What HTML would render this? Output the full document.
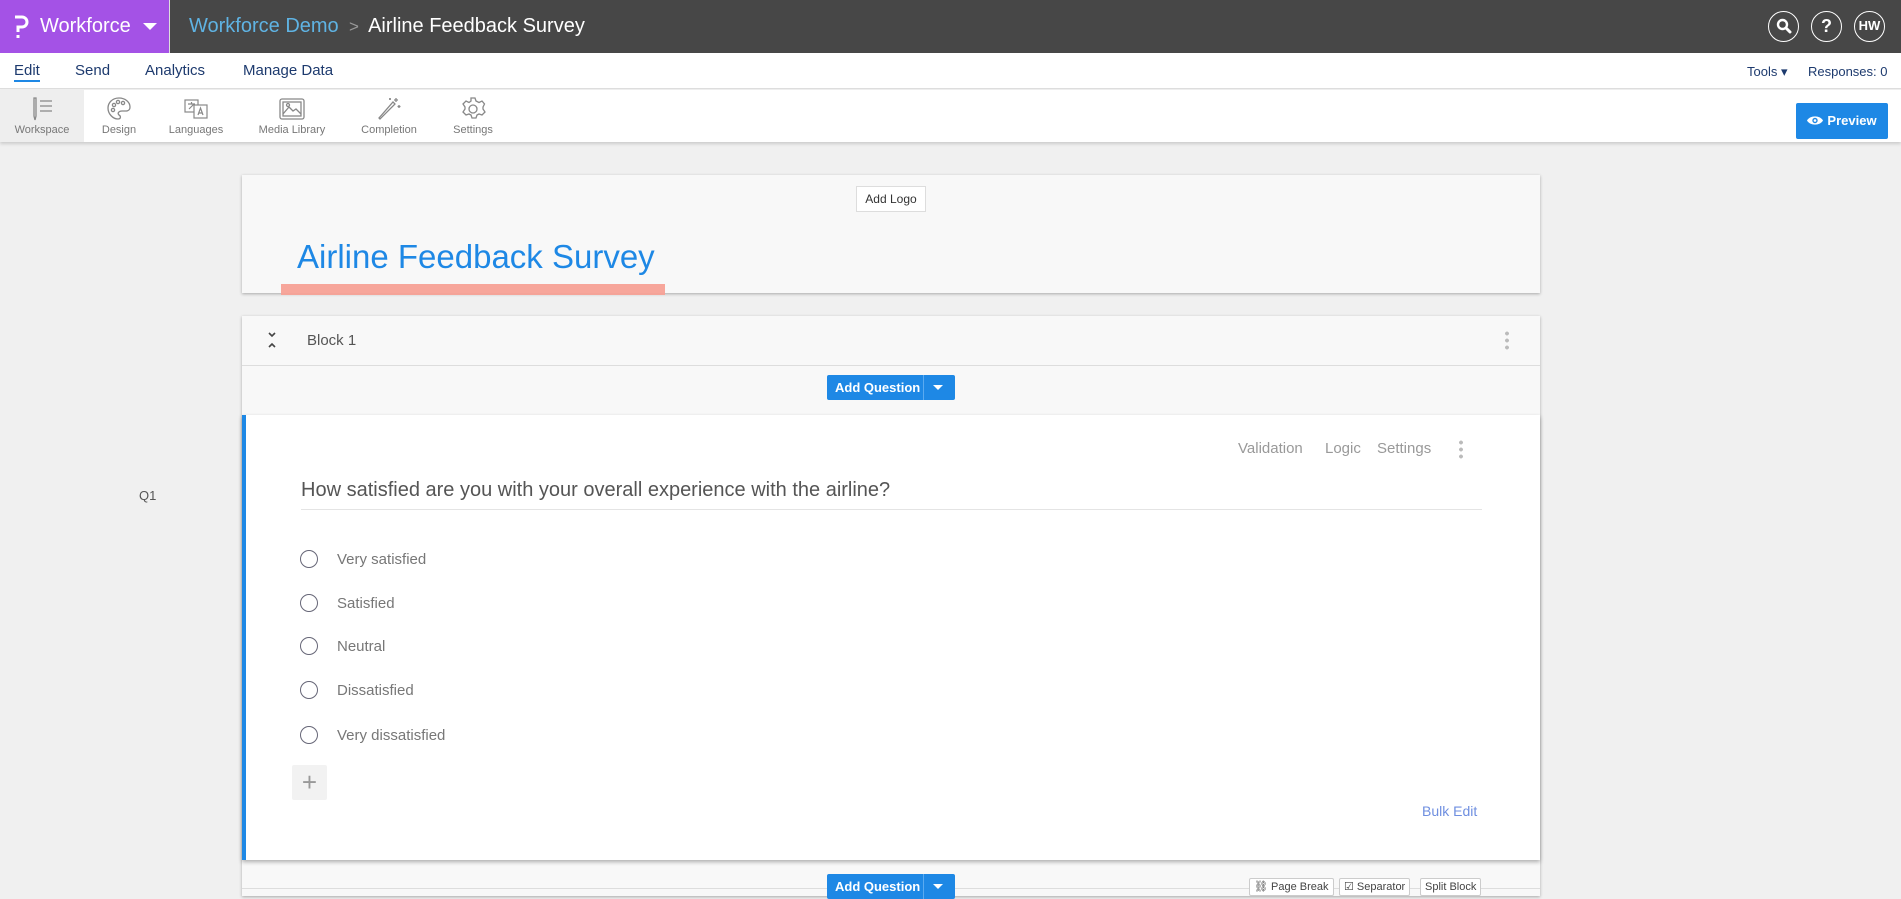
<!DOCTYPE html>
<html><head><meta charset="utf-8"><style>
*{box-sizing:border-box;margin:0;padding:0}
body{width:1901px;height:892px;overflow:hidden;background:#f0f0f0;font-family:"Liberation Sans",sans-serif;position:relative}
.a{position:absolute}
.top{left:0;top:0;width:1901px;height:53px;background:#474747}
.brand{left:0;top:0;width:170px;height:53px;background:#a452e6;border-right:1px solid #ddd}
.nav{left:0;top:53px;width:1901px;height:36px;background:#fff;border-bottom:1px solid #ddd}
.nav span{position:absolute;top:9px;font-size:15px;color:#1d3a6e}
.tb{left:0;top:90px;width:1901px;height:52px;background:#fff;box-shadow:0 2px 3px rgba(0,0,0,.15)}
.ti{position:absolute;top:0;height:52px;text-align:center;font-size:11px;color:#777}
.ti svg{display:block;margin:6px auto 2px}
.circ{width:31px;height:31px;border:1.5px solid #fff;border-radius:50%;color:#fff;font-weight:bold;text-align:center;line-height:28px;font-size:14px;top:11px}
.card{background:#f8f8f8;box-shadow:0 1px 3px rgba(0,0,0,.3)}
.btn{background:#1e88e5;color:#fff;font-size:13px;font-weight:bold;border-radius:2px}
.opt{position:absolute;left:300px;font-size:15px;color:#777}
.opt i{position:absolute;left:0;top:-1px;width:18px;height:18px;border:1.5px solid #667;border-radius:50%}
.opt span{position:absolute;left:37px;top:0;white-space:nowrap}
.sb{background:#fff;border:1px solid #ccc;font-size:11px;color:#444;height:18px;line-height:16px;padding:0 4px;border-radius:2px}
</style></head><body>
<div class="a top"></div>
<div class="a brand">
 <svg class="a" style="left:12px;top:14px" width="18" height="26" viewBox="0 0 18 26"><path d="M3 3h7a5 5 0 0 1 0 10H6v5" fill="none" stroke="#fff" stroke-width="3"/><rect x="4.5" y="21" width="3" height="3" fill="#fff"/></svg>
 <div class="a" style="left:40px;top:15px;color:#fff;font-size:20px">Workforce</div>
 <div class="a" style="left:143px;top:23px;width:0;height:0;border-left:7px solid transparent;border-right:7px solid transparent;border-top:7px solid #fff"></div>
</div>
<div class="a" style="left:189px;top:15px;font-size:20px;color:#5fb3e3;white-space:nowrap">Workforce Demo <span style="color:#999;font-size:17px">&nbsp;&gt;&nbsp;</span> <span style="color:#fff">Airline Feedback Survey</span></div>
<div class="a circ" style="left:1768px"><svg width="16" height="16" viewBox="0 0 16 16" style="margin-top:6px"><circle cx="6.5" cy="6.5" r="4.5" fill="none" stroke="#fff" stroke-width="2.4"/><path d="M10 10l4 4" stroke="#fff" stroke-width="3" stroke-linecap="round"/></svg></div>
<div class="a circ" style="left:1811px;font-size:18px">?</div>
<div class="a circ" style="left:1854px;font-size:13px">HW</div>

<div class="a nav">
 <span style="left:14px;border-bottom:2px solid #1e88e5;padding-bottom:1px">Edit</span>
 <span style="left:75px">Send</span>
 <span style="left:145px">Analytics</span>
 <span style="left:243px">Manage Data</span>
 <span style="left:1747px;font-size:13px;top:11px">Tools ▾</span>
 <span style="left:1808px;font-size:13px;top:11px">Responses: 0</span>
</div>

<div class="a tb">
 <div class="ti" style="left:0;width:84px;background:#eee"><svg width="26" height="26" viewBox="0 0 26 26" fill="none" stroke="#888" stroke-width="1.3"><path d="M5 2v18l1 4 1-4V2z"/><path d="M11 5h12M11 10h12M11 15h12"/></svg>Workspace</div>
 <div class="ti" style="left:94px;width:50px"><svg width="26" height="26" viewBox="0 0 26 26" fill="none" stroke="#888" stroke-width="1.3"><path d="M13 2C6 2 2 7 2 12c0 6 5 11 10 11 3 0 3-3 1-4-2-2 0-4 3-4h4c3 0 4-2 4-4 0-5-5-9-11-9z"/><circle cx="8" cy="9" r="1.6"/><circle cx="12" cy="6" r="1.6"/><circle cx="17" cy="7" r="1.6"/><circle cx="7" cy="14" r="1.6"/></svg>Design</div>
 <div class="ti" style="left:166px;width:60px"><svg width="26" height="26" viewBox="0 0 26 26" fill="none" stroke="#888" stroke-width="1.2"><rect x="2" y="4" width="13" height="12"/><rect x="11" y="9" width="13" height="13" fill="#fff"/><path d="M15 19l2.5-7 2.5 7M16 17h3M5 8h7M8.5 6v2M6 13l5-5"/></svg>Languages</div>
 <div class="ti" style="left:256px;width:72px"><svg width="28" height="26" viewBox="0 0 28 26" fill="none" stroke="#888" stroke-width="1.3"><rect x="2" y="3" width="24" height="20" rx="2"/><rect x="5" y="6" width="18" height="14"/><path d="M5 18l6-7 4 4 3-2 5 5"/><circle cx="10" cy="9" r="1.5"/></svg>Media Library</div>
 <div class="ti" style="left:358px;width:62px"><svg width="26" height="26" viewBox="0 0 26 26" fill="none" stroke="#888" stroke-width="1.3"><path d="M4 23l-1-1L17 6l2 2z"/><path d="M20 2v4M18 4h4M23 9v3M21.5 10.5h3M14 2v2M13 3h2"/></svg>Completion</div>
 <div class="ti" style="left:448px;width:50px"><svg width="26" height="26" viewBox="0 0 26 26" fill="none" stroke="#888" stroke-width="1.3"><path d="M11 2h4l1 3 3 1.5 3-1.5 2.5 3-1.5 3v2l2 3-3 3-3-1-2 1-1 3h-4l-1-3-2-1-3 1-3-3 2-3v-2l-2-3 3-3 3 1.5 2-1.5z"/><circle cx="13" cy="13" r="4"/></svg>Settings</div>
 <div class="a btn" style="left:1796px;top:13px;width:92px;height:36px;line-height:36px;font-size:13px;text-align:center"><svg width="16" height="11" viewBox="0 0 16 11" style="vertical-align:-1px;margin-right:4px"><path d="M0 5.5C3 0 13 0 16 5.5 13 11 3 11 0 5.5z" fill="#fff"/><circle cx="8" cy="5.5" r="2.7" fill="#1e88e5"/><circle cx="8" cy="5.5" r="1.3" fill="#fff"/></svg>Preview</div>
</div>

<!-- header card -->
<div class="a card" style="left:242px;top:175px;width:1298px;height:118px"></div>
<div class="a" style="left:856px;top:186px;width:70px;height:26px;background:#fff;border:1px solid #ddd;font-size:12px;color:#333;text-align:center;line-height:24px">Add Logo</div>
<div class="a" style="left:297px;top:238px;font-size:33px;color:#1e88e5;white-space:nowrap">Airline Feedback Survey</div>
<div class="a" style="left:281px;top:284px;width:384px;height:11px;background:#f7a196;opacity:.95"></div>

<!-- block -->
<div class="a card" style="left:242px;top:316px;width:1298px;height:580px"></div>
<div class="a" style="left:242px;top:365px;width:1298px;height:1px;background:#ddd"></div>
<svg class="a" style="left:267px;top:331px" width="10" height="18" viewBox="0 0 10 18" fill="none" stroke="#444" stroke-width="1.6"><path d="M2 2l3 3 3-3M2 16l3-3 3 3"/></svg>
<div class="a" style="left:307px;top:332px;font-size:15px;color:#555">Block 1</div>
<div class="a" style="left:1505px;top:330px;width:4px;height:20px;background:radial-gradient(circle,#bbb 1.8px,transparent 2px) 0 0/4px 7px"></div>
<div class="a btn" style="left:827px;top:375px;width:128px;height:25px;line-height:25px"><span style="padding-left:8px">Add Question</span><span style="position:absolute;left:96px;top:0;width:1px;height:25px;background:#5aaaf0"></span><span style="position:absolute;left:106px;top:10px;border-left:5px solid transparent;border-right:5px solid transparent;border-top:5px solid #fff"></span></div>

<!-- question card -->
<div class="a" style="left:242px;top:415px;width:1298px;height:445px;background:#fff;border-left:4px solid #1e88e5;box-shadow:0 2px 4px rgba(0,0,0,.3)"></div>
<div class="a" style="left:1238px;top:440px;font-size:15px;color:#999;white-space:nowrap">Validation</div>
<div class="a" style="left:1325px;top:440px;font-size:15px;color:#999">Logic</div>
<div class="a" style="left:1377px;top:440px;font-size:15px;color:#999">Settings</div>
<div class="a" style="left:1459px;top:439px;width:4px;height:20px;background:radial-gradient(circle,#bbb 1.8px,transparent 2px) 0 0/4px 7px"></div>
<div class="a" style="left:139px;top:488px;font-size:13px;color:#555">Q1</div>
<div class="a" style="left:301px;top:479px;font-size:20px;color:#555;white-space:nowrap">How satisfied are you with your overall experience with the airline?</div>
<div class="a" style="left:301px;top:509px;width:1181px;height:1px;background:#e4e4e4"></div>
<div class="opt" style="top:551px"><i></i><span>Very satisfied</span></div>
<div class="opt" style="top:595px"><i></i><span>Satisfied</span></div>
<div class="opt" style="top:638px"><i></i><span>Neutral</span></div>
<div class="opt" style="top:682px"><i></i><span>Dissatisfied</span></div>
<div class="opt" style="top:727px"><i></i><span>Very dissatisfied</span></div>
<div class="a" style="left:292px;top:765px;width:35px;height:35px;background:#f2f2f2;border-radius:2px;color:#999;font-size:26px;text-align:center;line-height:34px">+</div>
<div class="a" style="left:1422px;top:803px;font-size:14px;color:#6f8fe0">Bulk Edit</div>

<div class="a" style="left:242px;top:888px;width:1298px;height:1px;background:#ddd"></div>
<div class="a btn" style="left:827px;top:874px;width:128px;height:25px;line-height:25px"><span style="padding-left:8px">Add Question</span><span style="position:absolute;left:96px;top:0;width:1px;height:25px;background:#5aaaf0"></span><span style="position:absolute;left:106px;top:10px;border-left:5px solid transparent;border-right:5px solid transparent;border-top:5px solid #fff"></span></div>
<div class="a sb" style="left:1249px;top:878px">⛓ Page Break</div>
<div class="a sb" style="left:1339px;top:878px">☑ Separator</div>
<div class="a sb" style="left:1420px;top:878px">Split Block</div>
</body></html>
